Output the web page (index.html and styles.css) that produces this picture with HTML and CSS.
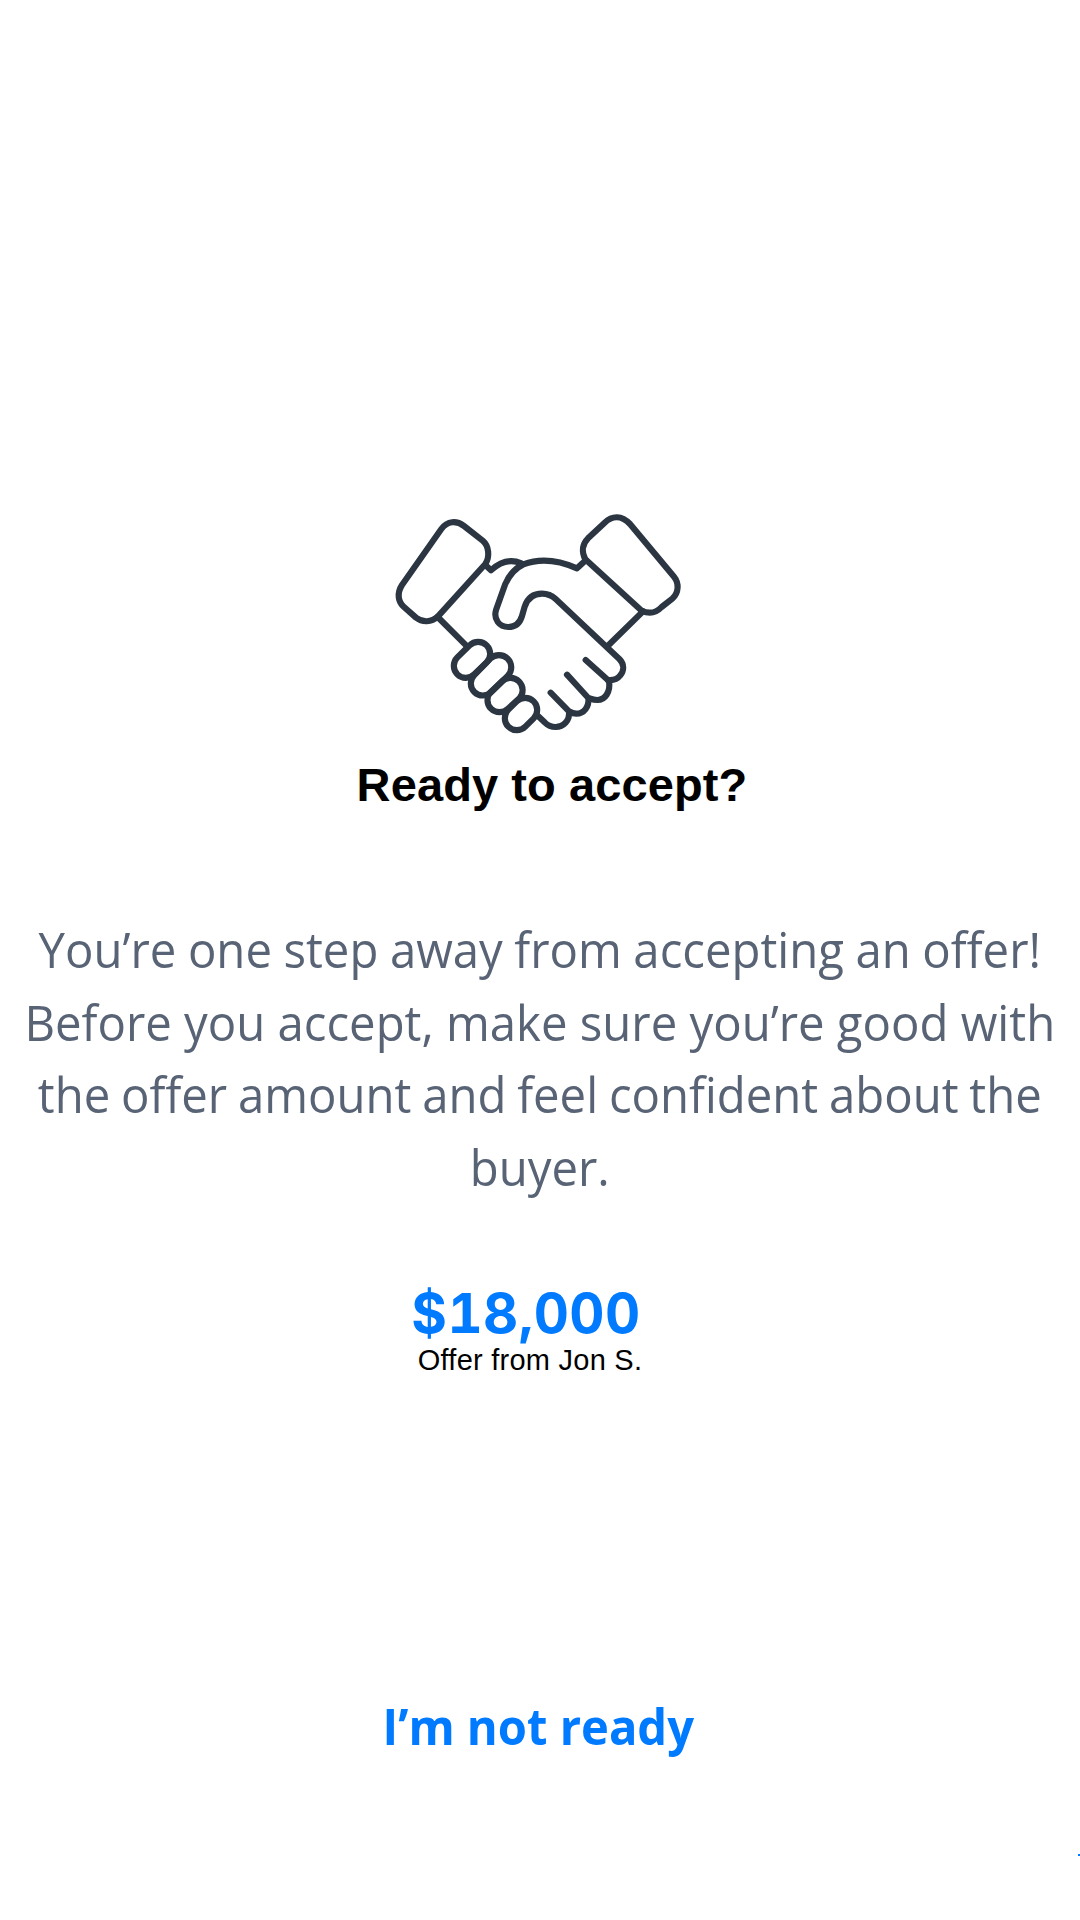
FILE: index.html
```html
<!DOCTYPE html>
<html lang="en">
<head>
<meta charset="utf-8">
<title>Accept offer</title>
<link rel="stylesheet" href="styles.css">
</head>
<body>
<main class="screen">
  <svg class="handshake" viewBox="0 0 960 750" aria-hidden="true">
    <path d="M174 349L316 192C330 170 327 138 308 122L252 78C230 61 202 62 184 87L66 255C50 280 54 305 72 321L108 353C127 368 154 368 174 349Z"/>
    <path d="M616 178C604 155 607 132 624 115L674 68C697 46 725 46 750 72L882 230C898 250 896 278 878 295L845 321C828 339 806 342 785 332Z"/>
    <path d="M316 195L333 211Q378 170 424 190M173 351L259 437M789 334L683 438"/>
    <path d="M618 180L591 205C530 178 475 176 430 193C400 207 386 228 375 254L348 330C340 358 358 381 385 381C408 381 420 368 426 348L434 320C444 290 462 281 486 281C505 281 515 286 527 297L718 477C733 492 733 512 720 527C710 540 694 541 684 540"/>
    <path d="M617 480L687 543C692 575 676 600 652 600C642 600 634 597 625 594C628 620 612 641 589 641C578 641 572 637 567 634C570 662 550 681 527 681C512 681 502 675 494 667L474 648M561 524L625 594M512 578L567 634"/>
    <path d="M269 436A36 36 0 0 1 320 487L283 523A36 36 0 0 1 232 472Z"/>
    <path d="M331 476A36.500 36.500 0 0 1 383 528L334 576A36 36 0 0 1 283 525Z"/>
    <path d="M367 543A36.500 36.500 0 0 1 419 594L384 626A36 36 0 0 1 333 575Z"/>
    <path d="M410 604A36 36 0 0 1 461 655L436 680A36 36 0 0 1 385 629Z"/>
  </svg>
  <h1 class="title">Ready to accept?</h1>
  <p class="message">
    <span class="line snug">You’re one step away from accepting an offer!</span>
    <span class="line">Before you accept, make sure you’re good with</span>
    <span class="line tight">the offer amount and feel confident about the</span>
    <span class="line tight">buyer.</span>
  </p>
  <div class="offer">
    <strong class="price">$18,000</strong>
    <span class="from">Offer from Jon S.</span>
  </div>
  <a class="decline">I’m not ready</a>
  <i class="edge"></i>
</main>
</body>
</html>
```
FILE: styles.css
```css
* { box-sizing: border-box; }
body { margin: 0; background: #fff; }
.screen {
  position: relative;
  width: 1080px;
  height: 1920px;
  padding-top: 500px;
  display: flex;
  flex-direction: column;
  align-items: center;
  overflow: hidden;
  white-space: nowrap;
}
.handshake {
  width: 320px;
  height: 250px;
  fill: none;
  stroke: #2b3642;
  stroke-width: 18.5;
  stroke-linecap: round;
  stroke-linejoin: round;
}
.title {
  margin: 8px 0 0 24px;
  font: 700 47px/54px "Liberation Sans", sans-serif;
  letter-spacing: 0.1px;
  color: #000;
}
.message {
  margin: 101px 0 0;
  font: 400 50px/72.700px "Open Sans", sans-serif;
  color: #586375;
  transform: scaleX(0.946);
}
.line { display: block; text-align: center; }
.snug { word-spacing: -0.8px; }
.tight { word-spacing: -1.600px; }
.offer {
  margin: 79px 0 0 -28px;
  display: flex;
  flex-direction: column;
  align-items: center;
}
.price {
  font: 700 54.500px/61px "Inter", sans-serif;
  font-variant-numeric: tabular-nums;
  letter-spacing: 0.4px;
  color: #007aff;
}
.from {
  padding-left: 8px;
  font: 400 29px/32px "Liberation Sans", sans-serif;
  letter-spacing: 0.250px;
  color: #000;
}
.decline {
  margin: 315px 3px 0 0;
  font: 700 50px/70px "Open Sans", sans-serif;
  color: #007aff;
  transform: scaleX(0.942);
}
.edge {
  position: absolute;
  right: 0;
  top: 1854px;
  width: 2px;
  height: 2px;
  background: #007aff;
}
```
